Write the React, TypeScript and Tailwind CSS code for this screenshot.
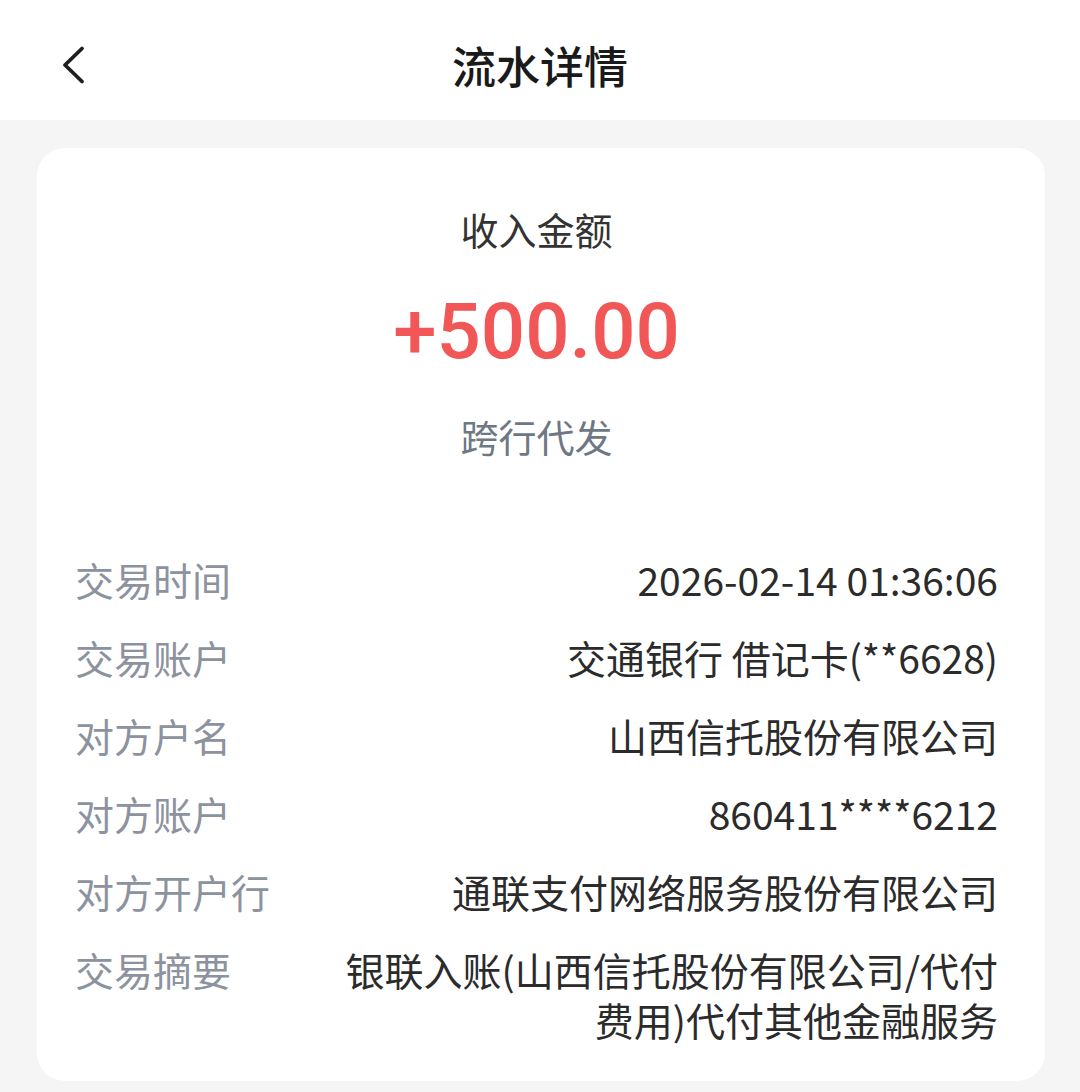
export default function App() {
  const rows: [string, string][] = [
    ["交易时间", "2026-02-14 01:36:06"],
    ["交易账户", "交通银行 借记卡(**6628)"],
    ["对方户名", "山西信托股份有限公司"],
    ["对方账户", "860411****6212"],
    ["对方开户行", "通联支付网络服务股份有限公司"],
    ["交易摘要", "银联入账(山西信托股份有限公司/代付费用)代付其他金融服务"],
  ];

  return (
    <div
      className="min-h-[1092px] w-full bg-[#f5f5f5]"
      style={{ fontFamily: '"Noto Sans CJK SC", "Noto Sans", sans-serif' }}
    >
      {/* top bar */}
      <div className="relative flex h-[120px] items-center justify-center bg-white pt-[10px]">
        <svg
          className="absolute left-[57px] top-[44px]"
          width="32"
          height="42"
          viewBox="0 0 32 42"
          fill="none"
        >
          <path
            d="M25 4.5 L8 21 L25 37.5"
            stroke="#1f1f1f"
            strokeWidth="3.8"
            strokeLinecap="round"
            strokeLinejoin="round"
          />
        </svg>
        <h1 className="text-[44px] font-medium leading-[50px] text-[#1a1a1a]">流水详情</h1>
      </div>

      <div className="pt-[28px]">
        <div className="ml-[37px] mr-[35px] rounded-[28px] bg-white pb-[37px] pl-[38px] pr-[47px] pt-[56px]">
          <div className="flex flex-col items-center">
            <p className="text-[38px] leading-[50px] text-[#333333]">收入金额</p>
            <p
              className="mt-[28px] text-[78px] font-medium leading-[100px] text-[#f25757]"
              style={{ fontFamily: 'Roboto, "Noto Sans", sans-serif' }}
            >
              +500.00
            </p>
            <p className="mt-[29px] text-[38px] leading-[50px] text-[#6e7784]">跨行代发</p>
          </div>

          <div className="mt-[93px] flex flex-col gap-[28px]">
            {rows.map(([label, value]) => (
              <div key={label} className="flex items-start justify-between gap-6">
                <span className="shrink-0 text-[39px] leading-[50px] text-[#8c939e]">{label}</span>
                <span className="max-w-[660px] text-right text-[39px] leading-[50px] text-[#2b2b2b]">
                  {value}
                </span>
              </div>
            ))}
          </div>
        </div>
      </div>
    </div>
  );
}
